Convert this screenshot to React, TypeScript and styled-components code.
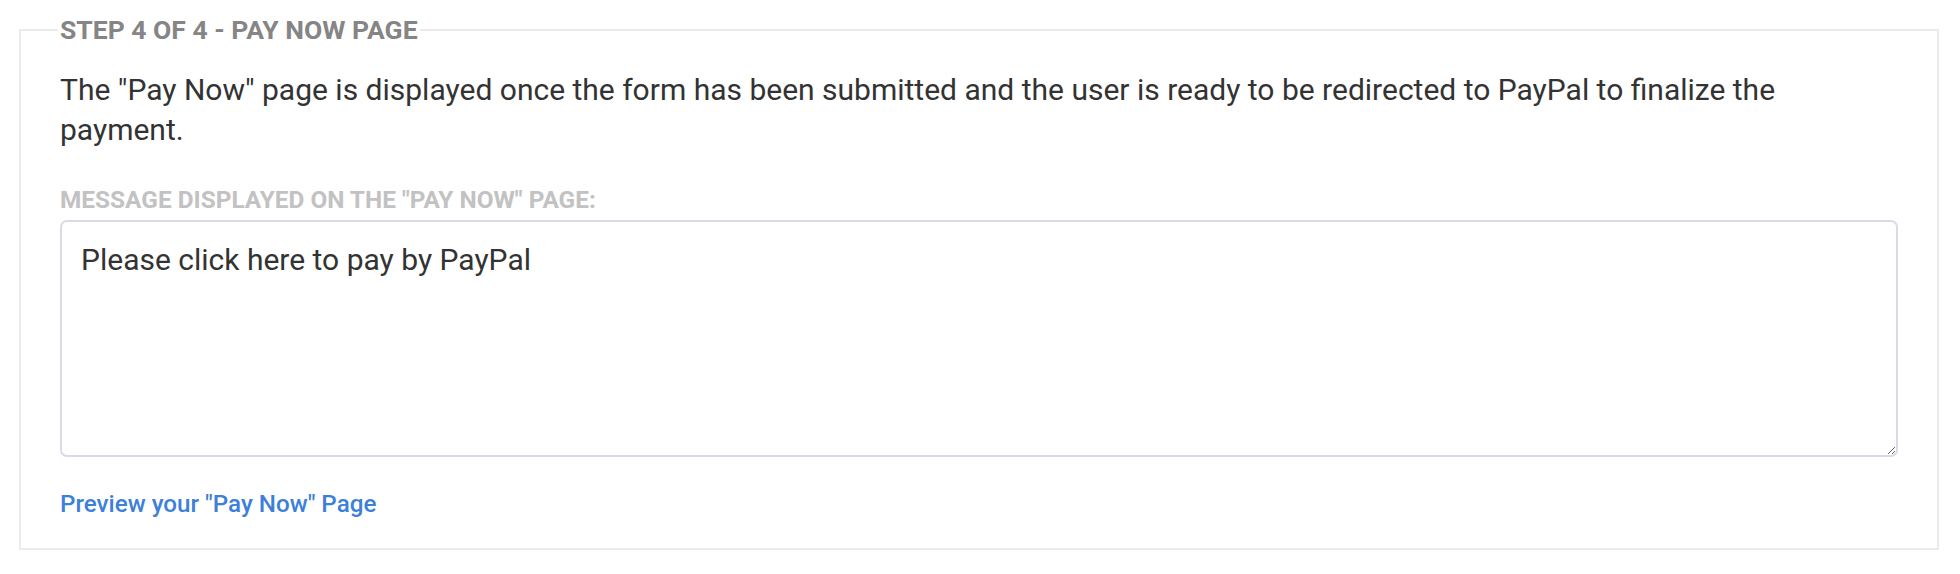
import React from 'react';
import styled, { createGlobalStyle } from 'styled-components';

const GlobalStyle = createGlobalStyle`
	html, body {
		margin: 0;
		padding: 0;
		background: #ffffff;
	}
	body {
		font-family: Roboto, "Liberation Sans", Arial, sans-serif;
	}
`;

const Page = styled.div`
	padding: 14px 21px 0 19px;
`;

const StepBox = styled.fieldset`
	margin: 0;
	border: 2px solid #ebebeb;
	padding: 24px 39px 29px 39px;
	min-width: 0;
`;

const StepTitle = styled.legend`
	padding: 0 2px;
	margin-left: -2px;
	font-size: 26.5px;
	line-height: 32px;
	font-weight: 700;
	color: #858585;
	text-transform: uppercase;
`;

const Intro = styled.p`
	margin: 0;
	font-size: 30px;
	line-height: 40px;
	color: #333333;
`;

const FieldLabel = styled.label`
	display: block;
	margin-top: 35px;
	font-size: 24.4px;
	line-height: 30px;
	font-weight: 700;
	color: #c2c2c2;
	text-transform: uppercase;
`;

const MessageInput = styled.textarea`
	display: block;
	box-sizing: border-box;
	width: 100%;
	height: 237px;
	margin-top: 5px;
	padding: 18px 19px;
	border: 2px solid #d8dbe7;
	border-radius: 7px;
	font-family: Roboto, "Liberation Sans", Arial, sans-serif;
	font-size: 30px;
	line-height: 40px;
	color: #333333;
	outline: none;
	resize: vertical;
`;

const PreviewLink = styled.a`
	display: inline-block;
	margin-top: 32px;
	font-size: 24.2px;
	line-height: 30px;
	font-weight: 500;
	color: #3d7fd9;
	text-decoration: none;
	cursor: pointer;
`;

export default function App() {
	return (
		<Page>
			<GlobalStyle />
			<StepBox>
				<StepTitle>Step 4 of 4 - Pay Now Page</StepTitle>
				<Intro>
					The "Pay Now" page is displayed once the form has been submitted and the user is ready to be
					redirected to PayPal to finalize the payment.
				</Intro>
				<FieldLabel htmlFor="paynow-message">Message displayed on the "Pay Now" page:</FieldLabel>
				<MessageInput id="paynow-message" defaultValue="Please click here to pay by PayPal" />
				<PreviewLink>Preview your "Pay Now" Page</PreviewLink>
			</StepBox>
		</Page>
	);
}
